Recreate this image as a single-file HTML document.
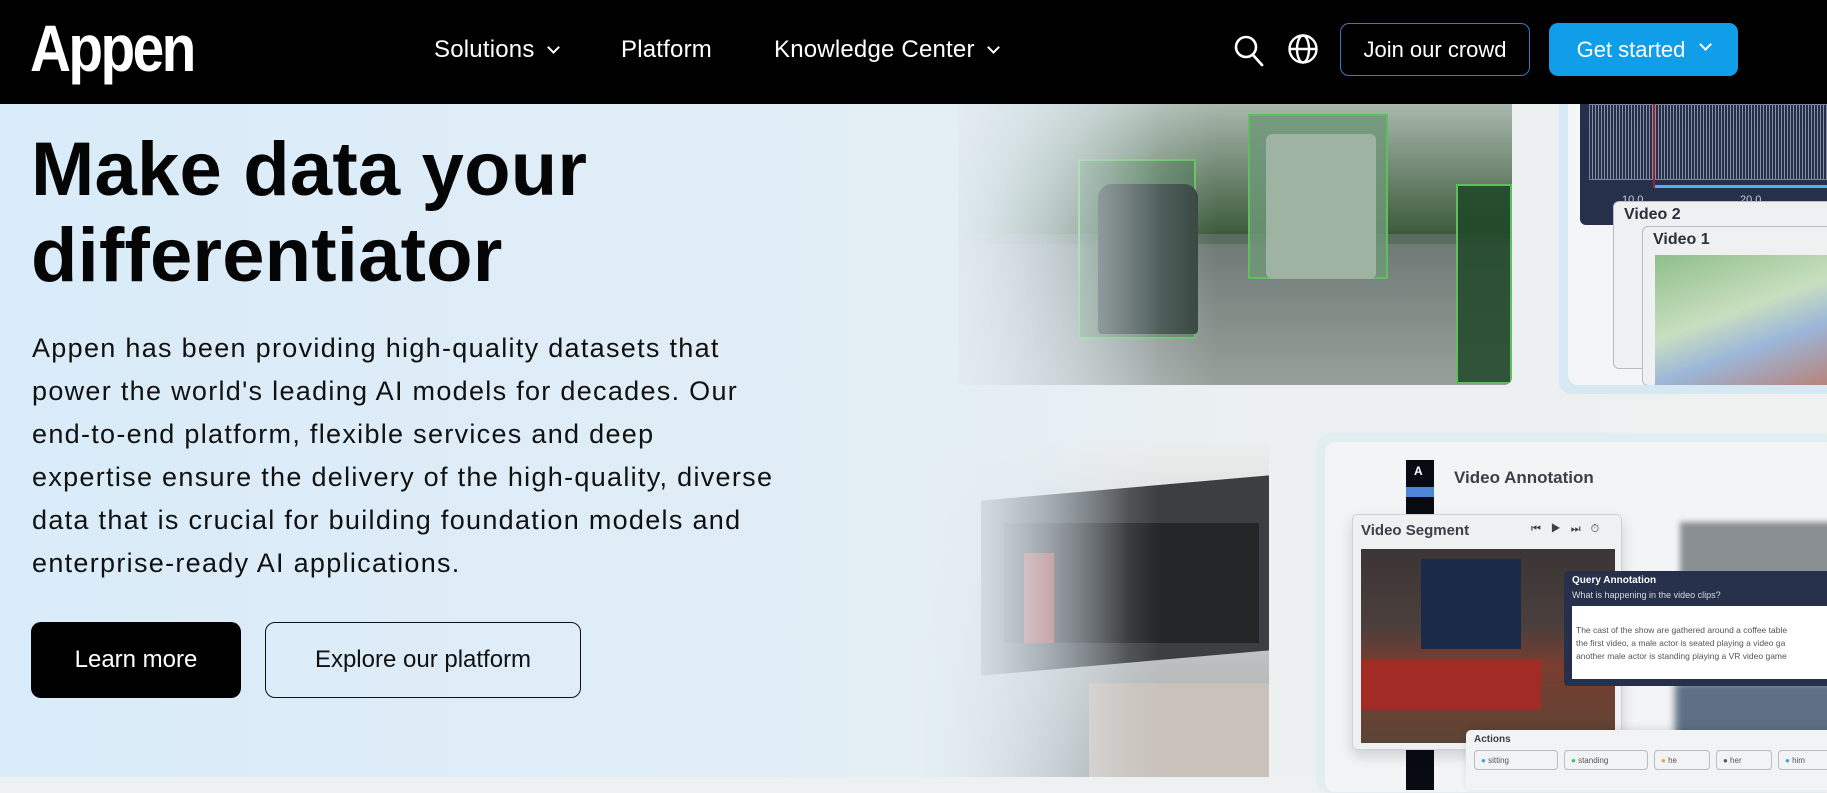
<!DOCTYPE html>
<html><head><meta charset="utf-8"><style>
*{margin:0;padding:0;box-sizing:border-box}
body{width:1827px;height:777px;overflow:hidden;font-family:"Liberation Sans",sans-serif;background:#eef1f1;position:relative}
.abs{position:absolute}
nav{position:absolute;left:0;top:0;width:1827px;height:104px;background:#000;z-index:10}
.nav-t{color:#fff;font-size:24px;top:36px;position:absolute;letter-spacing:.2px}
.chev{display:inline-block;width:9px;height:9px;border-right:2px solid #fff;border-bottom:2px solid #fff;transform:rotate(45deg);margin-left:14px;position:relative;top:-5px}
.hero{left:0;top:104px;width:1827px;height:673px;background:linear-gradient(90deg,#d9ecf9 0%,#e0edf6 40%,#e5eef4 52%,#ecf0f1 70%,#eef1f0 100%)}
h1{position:absolute;left:31px;top:127px;font-size:76px;line-height:86px;font-weight:bold;color:#050505;letter-spacing:0.2px}
p.d{position:absolute;left:32px;top:327px;font-size:27px;line-height:43px;color:#111;letter-spacing:1.3px}
.btn{position:absolute;top:622px;height:76px;border-radius:10px;font-size:24px;display:flex;align-items:center;justify-content:center}
.fade{position:absolute;left:860px;top:104px;width:300px;height:673px;background:linear-gradient(90deg,rgba(228,238,245,1) 10%,rgba(228,238,245,0));z-index:5}
</style></head><body>
<div class="abs hero"></div>
<nav>
 <div class="abs" style="left:30px;top:10px;color:#fff;font-size:66px;font-weight:bold;letter-spacing:-3px;transform:scaleX(.86);transform-origin:left">Appen</div>
 <div class="nav-t" style="left:434px">Solutions<span class="chev"></span></div>
 <div class="nav-t" style="left:621px">Platform</div>
 <div class="nav-t" style="left:774px">Knowledge Center<span class="chev"></span></div>
 <svg class="abs" style="left:1233px;top:34px" width="32" height="34" viewBox="0 0 32 34"><circle cx="13" cy="13" r="10" fill="none" stroke="#fff" stroke-width="2.6"/><line x1="20" y1="21" x2="29" y2="31" stroke="#fff" stroke-width="2.8" stroke-linecap="round"/></svg>
 <svg class="abs" style="left:1287px;top:33px" width="32" height="32" viewBox="0 0 32 32" fill="none" stroke="#fff" stroke-width="2.4"><circle cx="16" cy="16" r="13.5"/><ellipse cx="16" cy="16" rx="6" ry="13.5"/><line x1="2.5" y1="16" x2="29.5" y2="16"/></svg>
 <div class="abs" style="left:1340px;top:23px;width:190px;height:53px;border:1.5px solid #3a7cbf;border-radius:9px;color:#fff;font-size:22px;display:flex;align-items:center;justify-content:center">Join our crowd</div>
 <div class="abs" style="left:1549px;top:23px;width:189px;height:53px;background:#119ee9;border-radius:9px;color:#fff;font-size:22px;display:flex;align-items:center;justify-content:center">Get started<span class="chev" style="margin-left:16px"></span></div>
</nav>

<div class="abs" style="left:958px;top:104px;width:554px;height:281px;border-radius:0 0 8px 8px;overflow:hidden;background:linear-gradient(180deg,#8fa193 0%,#4f6652 35%,#606e66 55%,#7f8985 100%)">
 <div class="abs" style="left:0;top:0;width:554px;height:130px;background:linear-gradient(180deg,#a9b8ad,#3c5a3b)"></div>
 <div class="abs" style="left:0;top:140px;width:554px;height:141px;background:linear-gradient(180deg,#6f7a76,#98a09b)"></div>
 <div class="abs" style="left:120px;top:55px;width:118px;height:180px;border:2px solid #5fbf5f;background:rgba(60,110,70,.55)"></div>
 <div class="abs" style="left:140px;top:80px;width:100px;height:150px;background:#2e3d37;border-radius:14px 14px 4px 4px"></div>
 <div class="abs" style="left:290px;top:10px;width:140px;height:165px;border:2px solid #5fbf5f;background:rgba(110,150,120,.85)"></div>
 <div class="abs" style="left:308px;top:30px;width:110px;height:145px;background:#9fb3a3;border-radius:6px"></div>
 <div class="abs" style="left:498px;top:80px;width:56px;height:200px;border:2px solid #5fbf5f;background:rgba(30,70,40,.85)"></div>
 <div class="abs" style="left:0;top:0;width:260px;height:281px;background:linear-gradient(90deg,rgba(228,238,244,.85),rgba(228,238,244,0))"></div>
</div>

<div class="abs" style="left:1559px;top:90px;width:290px;height:304px;background:#d6e8f1;border-radius:12px"></div>
<div class="abs" style="left:1568px;top:90px;width:270px;height:295px;background:#f4f5f6;border-radius:10px;overflow:hidden">
 <div class="abs" style="left:12px;top:0;width:270px;height:135px;background:#27304a;border-radius:6px"></div>
 <div class="abs" style="left:21px;top:14px;width:260px;height:76px;border:1px solid #8b93a8;background:repeating-linear-gradient(90deg,#27304a 0 2px,#9aa1b3 2px 3px);opacity:.85"></div>
 <div class="abs" style="left:85px;top:14px;width:2px;height:84px;background:#a02030"></div>
 <div class="abs" style="left:87px;top:95px;width:200px;height:3px;background:#4fb4ec"></div>
 <div class="abs" style="left:54px;top:104px;color:#c9cdd6;font-size:11px">10.0</div>
 <div class="abs" style="left:172px;top:104px;color:#c9cdd6;font-size:11px">20.0</div>
 <div class="abs" style="left:45px;top:111px;width:240px;height:168px;background:#eef0f2;border:1px solid #b8bcc2;border-radius:6px;font-weight:bold;color:#2a2f3a;font-size:16px;padding:4px 10px">Video 2</div>
 <div class="abs" style="left:74px;top:136px;width:230px;height:160px;background:#eef0f2;border:1px solid #b8bcc2;border-radius:6px;font-weight:bold;color:#2a2f3a;font-size:16px;padding:4px 10px">Video 1
  <div class="abs" style="left:12px;top:28px;width:220px;height:135px;background:linear-gradient(160deg,#8fbf8a,#c9dfc0 40%,#9cb7d9 60%,#c0725a)"></div></div>
</div>

<div class="abs" style="left:909px;top:443px;width:360px;height:334px;border-radius:8px 8px 0 0;overflow:hidden;background:linear-gradient(180deg,#eceeee,#c9cccc 50%,#9ea4a6)">
 <div class="abs" style="left:72px;top:45px;width:288px;height:175px;background:#3c3f42;transform:skewY(-5deg)"></div>
 <div class="abs" style="left:95px;top:80px;width:255px;height:120px;background:#242628"></div>
 <div class="abs" style="left:115px;top:110px;width:30px;height:90px;background:#9b3a34"></div>
 <div class="abs" style="left:180px;top:240px;width:180px;height:94px;background:#c9c2bb"></div>
 <div class="abs" style="left:0;top:0;width:220px;height:334px;background:linear-gradient(90deg,rgba(228,238,245,1),rgba(228,238,245,0))"></div>
</div>

<div class="abs" style="left:1316px;top:433px;width:520px;height:360px;background:#e3eef3;border-radius:14px"></div>
<div class="abs" style="left:1325px;top:442px;width:510px;height:350px;background:#f2f4f5;border-radius:10px;overflow:hidden">
 <div class="abs" style="left:81px;top:18px;width:28px;height:330px;background:#080b12"></div>
 <div class="abs" style="left:89px;top:22px;color:#fff;font-weight:bold;font-size:12px">A</div>
 <div class="abs" style="left:81px;top:45px;width:28px;height:10px;background:#4d86d9"></div>
 <div class="abs" style="left:129px;top:26px;font-weight:bold;font-size:17px;color:#3a3f48">Video Annotation</div>
 <div class="abs" style="left:355px;top:80px;width:160px;height:80px;background:#8a8f94;filter:blur(3px)"></div>
 <div class="abs" style="left:350px;top:240px;width:170px;height:70px;background:#5e6f84;filter:blur(4px)"></div>
</div>
<div class="abs" style="left:1352px;top:514px;width:270px;height:236px;background:#eef0f2;border:1px solid #cdd1d5;border-radius:5px;box-shadow:0 6px 14px rgba(0,0,0,.15)">
 <div class="abs" style="left:8px;top:7px;font-weight:bold;font-size:15px;color:#3a3f48">Video Segment</div>
 <div class="abs" style="left:178px;top:8px;font-size:11px;color:#3a3f48;letter-spacing:10px">⏮▶⏭⏱</div>
 <div class="abs" style="left:8px;top:34px;width:254px;height:194px;background:linear-gradient(180deg,#3b3535 0%,#4b3f3c 40%,#7a3d30 60%,#5b4434 100%)">
  <div class="abs" style="left:60px;top:10px;width:100px;height:90px;background:#1c2a4a"></div>
  <div class="abs" style="left:0;top:110px;width:180px;height:50px;background:#a22b25"></div>
 </div>
</div>
<div class="abs" style="left:1564px;top:571px;width:270px;height:115px;background:#27304a;border-radius:4px;color:#fff">
 <div class="abs" style="left:8px;top:4px;font-size:10px;font-weight:bold">Query Annotation</div>
 <div class="abs" style="left:8px;top:19px;font-size:9px;color:#d7dbe4">What is happening in the video clips?</div>
 <div class="abs" style="left:8px;top:35px;width:262px;height:73px;background:#fff;color:#555;font-size:8.5px;line-height:13px;padding:18px 4px 0">The cast of the show are gathered around a coffee table<br>the first video, a male actor is seated playing a video ga<br>another male actor is standing playing a VR video game</div>
</div>
<div class="abs" style="left:1466px;top:730px;width:370px;height:60px;background:#f2f3f4;border-radius:5px;box-shadow:0 -2px 8px rgba(0,0,0,.1)">
 <div class="abs" style="left:8px;top:4px;font-weight:bold;font-size:10px;color:#3a3f48">Actions</div>
 <div class="abs" style="left:8px;top:20px;width:84px;height:20px;border:1px solid #bbb;border-radius:4px;font-size:8px;padding:5px 6px;color:#555"><span style="color:#3ba0e8">●</span> sitting</div>
 <div class="abs" style="left:98px;top:20px;width:84px;height:20px;border:1px solid #bbb;border-radius:4px;font-size:8px;padding:5px 6px;color:#555"><span style="color:#3fc25a">●</span> standing</div>
 <div class="abs" style="left:188px;top:20px;width:56px;height:20px;border:1px solid #bbb;border-radius:4px;font-size:8px;padding:5px 6px;color:#555"><span style="color:#f0a030">●</span> he</div>
 <div class="abs" style="left:250px;top:20px;width:56px;height:20px;border:1px solid #bbb;border-radius:4px;font-size:8px;padding:5px 6px;color:#555">● her</div>
 <div class="abs" style="left:312px;top:20px;width:56px;height:20px;border:1px solid #bbb;border-radius:4px;font-size:8px;padding:5px 6px;color:#555"><span style="color:#3ba0e8">●</span> him</div>
</div>

<div class="fade"></div>

<h1>Make data your<br>differentiator</h1>
<p class="d">Appen has been providing high-quality datasets that<br>power the world's leading AI models for decades. Our<br>end-to-end platform, flexible services and deep<br>expertise ensure the delivery of the high-quality, diverse<br>data that is crucial for building foundation models and<br>enterprise-ready AI applications.</p>
<div class="btn" style="left:31px;width:210px;background:#000;color:#fff">Learn more</div>
<div class="btn" style="left:265px;width:316px;border:1.5px solid #111;color:#111">Explore our platform</div>
</body></html>
